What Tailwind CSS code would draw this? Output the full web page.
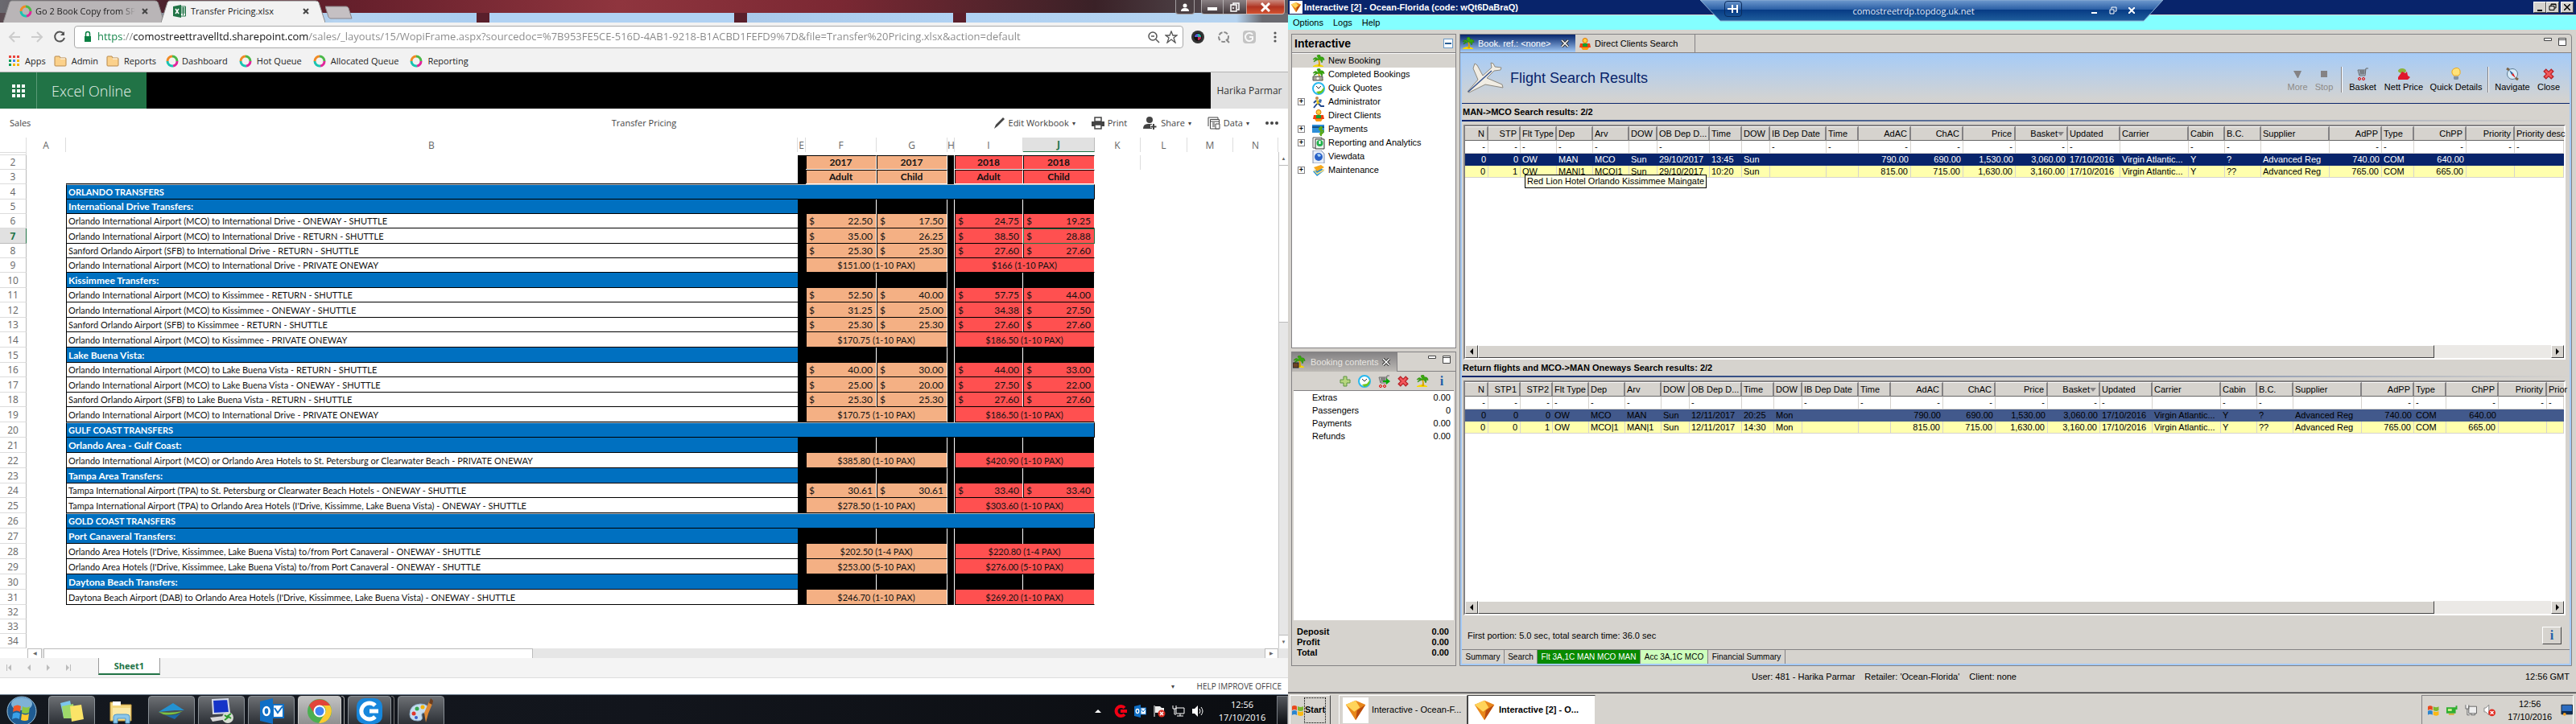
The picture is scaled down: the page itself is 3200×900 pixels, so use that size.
<!DOCTYPE html>
<html lang="en">
<head>
    <meta charset="utf-8">
    <meta name="viewport" content="width=device-width, initial-scale=1">
    <title>Desktop</title>
    <script src="https://cdn.jsdelivr.net/npm/@tailwindcss/browser@4"></script>
</head>
<body class="grid grid-cols-2 h-screen overflow-hidden bg-white text-black">

<!-- shared icons -->
<svg class="hidden">
    <symbol id="ring" viewBox="0 0 16 16" fill="none" stroke-width="3">
        <path d="M8 2a6 6 0 0 1 6 6" stroke="#4cb848"/><path d="M14 8a6 6 0 0 1-5 6" stroke="#e0259c"/>
        <path d="M9 14a6 6 0 0 1-7-6" stroke="#19c3b1"/><path d="M2 8a6 6 0 0 1 6-6" stroke="#f08a24"/>
    </symbol>
    <symbol id="folder" viewBox="0 0 16 14">
        <path d="M1 2q0-1 1-1h5l1 2h6q1 0 1 1v8q0 1-1 1H2q-1 0-1-1z" fill="#fbd18b" stroke="#b8894a"/>
        <path d="M8 4h6" stroke="#fff"/>
    </symbol>
    <symbol id="palm" viewBox="0 0 16 16">
        <path d="M1 14q7-4 13 0v1H1z" fill="#f8d800"/><path d="M7 6q2 4 0 8h3q0-5-1-8z" fill="#d9a400"/>
        <path d="M8 6Q4 1 1 6q3-1 4 0-3 1-3 3 3-2 6-3 3 0 4 4 2-3 0-4 3 0 3 1 0-5-5-4 1-2-1-3-3 0-3 2" fill="#3aa80e" stroke="#1d7d00" stroke-width=".5"/>
    </symbol>
    <symbol id="palmbag" viewBox="0 0 16 16">
        <use href="#palm"/><rect x="0" y="9" width="7" height="6" fill="#6d4326" stroke="#222"/>
    </symbol>
    <symbol id="client" viewBox="0 0 16 16">
        <circle cx="8" cy="3.500" r="3" fill="#ffcf40" stroke="#e07000"/><path d="M2 7h12l1 5H1z" fill="#f04010"/>
        <path d="M5 7h6v4H5z" fill="#16a030"/><path d="M3 12h10l-2 3H5z" fill="#ff9a10"/>
    </symbol>
    <symbol id="clock" viewBox="0 0 16 16">
        <circle cx="8" cy="8" r="7" fill="#fff" stroke="#27b8ef" stroke-width="2"/>
        <path d="M8 15l-3-3 6-1 4-5q0 8-7 9z" fill="#6cc61c"/><path d="M8 8L5 5M8 8l3-3" stroke="#333"/>
    </symbol>
    <symbol id="cross" viewBox="0 0 16 16">
        <path d="M3 3l10 10M13 3L3 13" stroke="#b61f24" stroke-width="5"/><path d="M4 4l8 8M12 4l-8 8" stroke="#f2575b" stroke-width="2.500"/>
    </symbol>
    <symbol id="cart" viewBox="0 0 16 16" fill="none">
        <path d="M15 1h-3l-1 9H4L2 3h10M4 5h7M5 7h6M5 3v6M7 3v6M9 3v6" stroke="#666"/>
        <circle cx="4" cy="14" r="1.500" stroke="#e00000"/><circle cx="9" cy="14" r="1.500" stroke="#e00000"/>
    </symbol>
    <symbol id="gem" viewBox="0 0 16 16">
        <path d="M1 4l7-3 7 3-7 11z" fill="#e8871a"/><path d="M1 4l7-3 3 5-4 3z" fill="#ffd45a"/><path d="M15 4L8 15l1-7z" fill="#b84a10"/>
    </symbol>
    <symbol id="winflag" viewBox="0 0 16 16">
        <path d="M1 3q3-2 6 0v5q-3-2-6 0z" fill="#e8491d"/><path d="M8 3q4 2 7 0v5q-3 2-7 0z" fill="#7cb72e"/>
        <path d="M1 9q3-2 6 0v5q-3-2-6 0z" fill="#2c85cf"/><path d="M8 9q4 2 7 0v5q-3 2-7 0z" fill="#fbb813"/>
    </symbol>
    <symbol id="outlook" viewBox="0 0 16 16">
        <path d="M1 2l8-2v16l-8-2z" fill="#0f6fc6"/><rect x="9" y="4" width="6.500" height="8" fill="#fff" stroke="#0f6fc6"/>
        <path d="M10 6l2 3 3-4" fill="none" stroke="#0f6fc6"/><ellipse cx="5" cy="8" rx="1.800" ry="2.500" fill="none" stroke="#fff" stroke-width="1.300"/>
    </symbol>
    <symbol id="paneMin" viewBox="0 0 10 10"><path d="M.5.500h9v3h-9z" fill="#fff" stroke="#444"/></symbol>
    <symbol id="paneMax" viewBox="0 0 10 10"><path d="M.5.500h9v9h-9zM.5 2.500h9" fill="#fff" stroke="#444"/></symbol>
    <symbol id="paneClose" viewBox="0 0 10 10"><path d="M1 1l8 8M9 1L1 9" stroke="#333" stroke-width="3.500"/><path d="M1 1l8 8M9 1L1 9" stroke="#fff" stroke-width="1.500"/></symbol>
    <symbol id="tabShape" viewBox="0 0 204 28" preserveAspectRatio="none"><path d="M0 28L8 3q1-2 3-2h181q3 0 4 2l8 25" stroke="#8d8d8d"/></symbol>
</svg>

<!-- left monitor: browser with the pricing workbook -->
<section class="flex flex-col min-w-0 h-full font-['Open_Sans',sans-serif] text-[11px] text-[#333]">

    <div class="h-7 flex items-start relative bg-[linear-gradient(90deg,#6a6a70_0,#4a1a26_14%,#67202c_28%,#8f353e_48%,#7b2833_65%,#3a2127_85%,#5c5b5f_99%)]">
        <div class="absolute inset-x-0 bottom-0 h-3 bg-[linear-gradient(90deg,#5a4a50_0,#b5d3f0_26%,#a9cdf0_37%,#5a1f2b_37%,#5a1f2b_38%,#b0d2f3_38%,#b0d2f3_57%,#5a1f2b_57%,#5a1f2b_58%,#a9c9ea_58%,#b0d2f3_74%,#5a1f2b_74%,#5a1f2b_75%,#b0d2f3_75%,#b5d3f0_96%,#6a6a70_98%)]"></div>
        <div class="relative w-[200px] h-7 ml-1">
            <svg class="absolute inset-0 w-full h-full" fill="#b9b5b7"><use href="#tabShape"/></svg>
            <div class="relative flex items-center h-7 pl-5 pr-2">
                <svg class="size-4"><use href="#ring"/></svg>
                <span class="ml-1 flex-1 overflow-hidden whitespace-nowrap text-[#222] [mask-image:linear-gradient(90deg,#000_85%,transparent)]">Go 2 Book Copy from SP</span>
                <button class="w-4 ml-2 mr-1" aria-label="Close tab"><svg class="size-2" stroke="#444" stroke-width="2" viewBox="0 0 8 8"><path d="M1 1l6 6M7 1L1 7"/></svg></button>
            </div>
        </div>
        <div class="relative w-[204px] h-7 -ml-1">
            <svg class="absolute inset-0 w-full h-full" fill="#f2f2f2"><use href="#tabShape"/></svg>
            <div class="relative flex items-center h-7 pl-[15px] pr-2">
                <svg class="size-4" viewBox="0 0 16 16"><path d="M9 2h6.500v12H9z" fill="#fff" stroke="#217346"/><path d="M10 4h5M10 6h5M10 8h5M10 10h5M12.500 3v10" stroke="#217346"/><path d="M0 2l10-2v16L0 14z" fill="#217346"/><path d="M3 5l4 6M7 5l-4 6" stroke="#fff" stroke-width="1.500"/></svg>
                <span class="ml-1.5 flex-1 text-[#222]">Transfer Pricing.xlsx</span>
                <button class="w-4 mr-1" aria-label="Close tab"><svg class="size-2" stroke="#444" stroke-width="2" viewBox="0 0 8 8"><path d="M1 1l6 6M7 1L1 7"/></svg></button>
            </div>
        </div>
        <button class="relative" aria-label="New tab"><svg class="w-9 h-6" viewBox="0 0 36 24"><path d="M0 8h26q2 0 3 2l4 13H7q-2 0-3-2z" fill="#c5c0c3" stroke="#8a8488"/></svg></button>
        <div class="relative ml-auto mr-1 flex h-[18px]">
            <button class="w-6 mr-2 border border-t-0 border-[#ddd]/60 rounded-b-sm bg-[#4b4044] flex justify-center items-center" aria-label="User"><svg class="size-3" fill="#fff" viewBox="0 0 12 12"><circle cx="6" cy="4" r="2.500"/><path d="M1 11q0-4 5-4t5 4z"/></svg></button>
            <button class="w-7 border border-t-0 border-[#ddd]/60 rounded-bl-sm bg-gradient-to-b from-[#8a8184] to-[#453a3e] flex justify-center items-center" aria-label="Minimise"><span class="w-3 h-1 bg-white mt-1"></span></button>
            <button class="w-7 border-b border-[#ddd]/60 bg-gradient-to-b from-[#8a8184] to-[#453a3e] flex justify-center items-center" aria-label="Restore"><svg class="size-3" fill="none" stroke="#fff" stroke-width="1.500" viewBox="0 0 12 12"><path d="M4 3V1h7v8H9M1 3h7v8H1zM4 6v2"/></svg></button>
            <button class="w-12 border border-t-0 border-[#ddd]/60 rounded-br-sm bg-gradient-to-b from-[#c98a80] via-[#b03422] to-[#d2512f] flex justify-center items-center" aria-label="Close"><svg class="size-3" stroke="#fff" stroke-width="3" viewBox="0 0 12 12"><path d="M1 1l10 10M11 1L1 11"/></svg></button>
        </div>
    </div>

    <div class="h-[35px] flex items-center bg-[#f2f2f2] pl-2.5 pr-2">
        <button class="w-7" aria-label="Back"><svg class="size-4" fill="none" stroke="#ccc" stroke-width="2" viewBox="0 0 16 16"><path d="M15 8H2M8 2L2 8l6 6"/></svg></button>
        <button class="w-7" aria-label="Forward"><svg class="size-4" fill="none" stroke="#ccc" stroke-width="2" viewBox="0 0 16 16"><path d="M1 8h13M8 2l6 6-6 6"/></svg></button>
        <button class="w-[26px]" aria-label="Reload"><svg class="size-4" fill="none" stroke="#555" stroke-width="2" viewBox="0 0 16 16"><path d="M13 4a6 6 0 1 0 1 5"/><path d="M14 1v5H9z" fill="#555" stroke="none"/></svg></button>
        <div class="flex-1 flex items-center h-7 bg-white border border-[#aaa] rounded-sm pl-2.5 pr-1.5">
            <svg class="w-3 h-4" viewBox="0 0 12 16"><path d="M2 7h8v7H2z" fill="#0b8043"/><path d="M3.500 7V4a2.500 2.500 0 0 1 5 0v3" fill="none" stroke="#0b8043" stroke-width="1.500"/></svg>
            <input id="address" aria-label="Address" class="flex-1 ml-1.5 text-[13px] outline-none text-transparent bg-clip-text bg-[linear-gradient(90deg,#0b8043_31px,#888_31px,#888_44px,#111_44px,#111_262px,#888_262px)]" value="https://comostreettravelltd.sharepoint.com/sales/_layouts/15/WopiFrame.aspx?sourcedoc=%7B953FE5CE-516D-4AB1-9218-B1ACBD1FEFD9%7D&amp;file=Transfer%20Pricing.xlsx&amp;action=default">
            <button aria-label="Zoom"><svg class="size-4 mr-1.5" fill="none" stroke="#555" stroke-width="1.500" viewBox="0 0 16 16"><circle cx="7" cy="7" r="5"/><path d="M11 11l4 4M5 7h4"/></svg></button>
            <button aria-label="Bookmark"><svg class="size-4" fill="none" stroke="#555" stroke-width="1.300" viewBox="0 0 16 16"><path d="M8 1l2 5h5l-4 3 2 6-5-4-5 4 2-6-4-3h5z"/></svg></button>
        </div>
        <div class="flex items-center gap-4 ml-2.5">
            <svg class="size-4" viewBox="0 0 16 16"><circle cx="8" cy="8" r="8" fill="#333"/><circle cx="8" cy="8" r="5" fill="#111"/><path d="M8 4a4 4 0 0 1 4 4H8z" fill="#29b6a0"/><path d="M4 8a4 4 0 0 1 4-4v4z" fill="#5a5ad6"/><path d="M12 8a4 4 0 0 1-4 4V8z" fill="#cc2a5a"/></svg>
            <svg class="size-4" fill="none" stroke="#8a8a8a" stroke-width="2" viewBox="0 0 16 16"><circle cx="8" cy="8" r="6" stroke-dasharray="5 2"/><path d="M11 11l4 4"/></svg>
            <svg class="size-4" viewBox="0 0 16 16"><rect width="16" height="16" rx="4" fill="#c4c4c4"/><path d="M12 5a5 5 0 1 0 0 6V8H8" fill="none" stroke="#f8f8f8" stroke-width="2"/></svg>
            <button aria-label="Menu"><svg class="size-4" fill="#555" viewBox="0 0 16 16"><circle cx="8" cy="3" r="1.600"/><circle cx="8" cy="8" r="1.600"/><circle cx="8" cy="13" r="1.600"/></svg></button>
        </div>
    </div>

    <nav class="h-[27px] flex items-center bg-[#f2f2f2] border-b border-[#b3b3b3] pl-[11px] gap-2.5 text-[#222]">
        <a href="#" class="flex items-center gap-1.5"><svg class="size-3.5" viewBox="0 0 14 14"><path d="M0 0h3v3H0zM5 0h3v3H5zM10 0h3v3h-3z" fill="#e8453c"/><path d="M0 5h3v3H0z" fill="#0b9d58"/><path d="M5 5h3v3H5z" fill="#4285f4"/><path d="M10 5h3v3h-3zM5 10h3v3H5zM10 10h3v3h-3z" fill="#f4b400"/><path d="M0 10h3v3H0z" fill="#0b9d58"/></svg>Apps</a>
        <a href="#" class="flex items-center gap-1.5"><svg class="w-4 h-3.5"><use href="#folder"/></svg>Admin</a>
        <a href="#" class="flex items-center gap-1.5"><svg class="w-4 h-3.5"><use href="#folder"/></svg>Reports</a>
        <a href="#" class="flex items-center gap-1 ml-0.5"><svg class="size-4"><use href="#ring"/></svg>Dashboard</a>
        <a href="#" class="flex items-center gap-1.5 ml-1"><svg class="size-4"><use href="#ring"/></svg>Hot Queue</a>
        <a href="#" class="flex items-center gap-1.5 ml-1"><svg class="size-4"><use href="#ring"/></svg>Allocated Queue</a>
        <a href="#" class="flex items-center gap-1.5 ml-1"><svg class="size-4"><use href="#ring"/></svg>Reporting</a>
    </nav>

    <header class="h-[45px] flex bg-black">
        <button class="w-[46px] bg-[#217346] border-r border-[#5b9a77] flex items-center justify-center" aria-label="App launcher"><svg class="size-4" fill="#fff" viewBox="0 0 16 16"><path d="M0 0h4v4H0zM6 0h4v4H6zM12 0h4v4h-4zM0 6h4v4H0zM6 6h4v4H6zM12 6h4v4h-4zM0 12h4v4H0zM6 12h4v4H6zM12 12h4v4h-4z"/></svg></button>
        <div class="w-[136px] bg-[#217346] text-[#e4f1ea] text-lg font-light flex items-center pl-[18px]">Excel Online</div>
        <div class="ml-auto w-24 bg-[#e1e1e1] text-xs flex items-center justify-center">Harika Parmar</div>
    </header>

    <div class="h-9 relative flex items-center pl-3 pr-3 text-[#444]">
        <a href="#">Sales</a>
        <span class="absolute inset-x-0 text-center pointer-events-none">Transfer Pricing</span>
        <div class="relative ml-auto flex items-center gap-5">
            <button class="flex items-center gap-1"><svg class="size-3.5" fill="#444" viewBox="0 0 14 14"><path d="M0 14l2-5 9-9 2 2-9 9z"/></svg>Edit Workbook <span class="text-[8px]">▾</span></button>
            <button class="flex items-center gap-1"><svg class="size-4" viewBox="0 0 16 16"><path d="M4 1h8v5H4z" fill="#fff" stroke="#444" stroke-width="1.500"/><path d="M0 6h16v6H0z" fill="#444"/><path d="M4 10h8v5H4z" fill="#fff" stroke="#444" stroke-width="1.500"/></svg>Print</button>
            <button class="flex items-center gap-1"><svg class="w-[18px] h-4" viewBox="0 0 18 16"><circle cx="8" cy="4" r="4" fill="#444"/><path d="M0 15q0-6 6-6h5v6z" fill="#444"/><path d="M13 8v8M9 12h8" stroke="#fff" stroke-width="4"/><path d="M13 9v7M9.500 12.500h7" stroke="#444" stroke-width="2"/></svg>Share <span class="text-[8px]">▾</span></button>
            <button class="flex items-center gap-1"><svg class="size-4" fill="none" stroke="#444" viewBox="0 0 16 16"><path d="M1 12V1h12v2M3.500 15V3.500h11V15zM3 6h11M6 8h3M6 10h3M6 12h3"/><path d="M10 9h5v6h-5z" fill="#fff"/></svg>Data <span class="text-[8px]">▾</span></button>
            <button aria-label="More"><svg class="w-4 h-1" fill="#444" viewBox="0 0 16 4"><circle cx="2" cy="2" r="2"/><circle cx="8" cy="2" r="2"/><circle cx="14" cy="2" r="2"/></svg></button>
        </div>
    </div>

    <div class="flex-1 min-h-0 flex bg-white">
        <div class="flex-1 min-w-0 overflow-hidden">
            <table class="w-full table-fixed border-separate border-spacing-0 font-[Lato,sans-serif] text-xs leading-[17px] text-[#111]">
                <colgroup>
                    <col class="w-[33px]"><col class="w-[49px]"><col><col class="w-2.5"><col class="w-[88px]"><col class="w-[88px]"><col class="w-[9px]">
                    <col class="w-[85px]"><col class="w-[89px]"><col class="w-[57px]"><col class="w-[58px]"><col class="w-[57px]"><col class="w-14">
                </colgroup>
                <thead id="sheetHead" class="font-['Open_Sans',sans-serif] text-[#666]"></thead>
                <tbody id="sheetBody"></tbody>
            </table>
        </div>
        <div class="w-3 mt-[18px] flex flex-col bg-[#e6e6e6] border-l border-[#c8c8c8]">
            <button class="h-[17px] bg-white border-b border-[#bbb] text-[6px] text-[#666]" aria-label="Scroll up">▲</button>
            <div class="h-[195px] bg-white border-b border-[#bbb]"></div>
            <button class="h-[17px] mt-auto bg-white border-t border-[#bbb] text-[6px] text-[#666]" aria-label="Scroll down">▼</button>
        </div>
    </div>
    <div class="h-3 flex bg-[#e6e6e6] pr-3 text-[6px] text-[#666]">
        <div class="w-[34px] bg-white"></div>
        <button class="w-[18px] bg-white border border-b-0 border-[#bbb]" aria-label="Scroll left">◀</button>
        <div class="w-[608px] ml-0.5 bg-white border border-b-0 border-[#bbb]"></div>
        <button class="w-[17px] ml-auto bg-white border border-b-0 border-[#bbb]" aria-label="Scroll right">▶</button>
    </div>
    <div class="h-[25px] flex items-start bg-[#f4f4f4] border-b border-[#ddd]">
        <div class="w-[122px] h-6 flex items-center justify-center gap-4 pr-[26px]">
            <button aria-label="First sheet"><svg class="size-2" fill="#bbb" viewBox="0 0 8 8"><path d="M0 0h1v8H0zM6 0v8L2 4z"/></svg></button>
            <button aria-label="Previous sheet"><svg class="size-2" fill="#bbb" viewBox="0 0 8 8"><path d="M6 0v8L2 4z"/></svg></button>
            <button aria-label="Next sheet"><svg class="size-2" fill="#bbb" viewBox="0 0 8 8"><path d="M2 0v8l4-4z"/></svg></button>
            <button aria-label="Last sheet"><svg class="size-2" fill="#bbb" viewBox="0 0 8 8"><path d="M2 0v8l4-4zM7 0h1v8H7z"/></svg></button>
        </div>
        <button class="w-[77px] h-[21px] bg-white border-x border-[#999] border-b-2 border-b-[#217346] text-[#217346] font-bold leading-[19px]">Sheet1</button>
    </div>
    <div class="h-5 flex items-center justify-end gap-7 pr-2 text-[10px] leading-5 text-[#444]"><span class="text-[8px]">▾</span><a href="#">HELP IMPROVE OFFICE</a></div>

    <footer class="h-10 flex items-center bg-gradient-to-r from-[#14181f] via-[#12151c] to-[#0b0d11] border-t border-[#6f7f90] text-white">
        <button class="w-[60px] flex pl-2" aria-label="Start"><svg class="size-[38px]" viewBox="0 0 38 38"><circle cx="19" cy="19" r="18" fill="#1f5b92" stroke="#9cc3dd"/><ellipse cx="19" cy="10" rx="13" ry="8" fill="#7fb2d6"/><path d="M9 13q5-3 9 0l-1 7q-4-3-9 0z" fill="#f0592a"/><path d="M20 13q5 3 9 0l-1 8q-4 2-9 0z" fill="#8cc63f"/><path d="M8 22q5-3 9 0l-1 7q-4-3-9 0z" fill="#3aa0e8"/><path d="M19 22q5 3 9 0l-1 8q-4 2-9 0z" fill="#fdc92e"/></svg></button>
        <button class="w-[58px] h-[38px] flex items-center justify-center border border-[#8a9096] rounded-sm bg-gradient-to-b from-[#6d7074] to-[#292d33]" aria-label="Sticky notes"><svg class="size-8" viewBox="0 0 32 32"><path d="M2 6l12-3 4 18-12 3z" fill="#7cc6ec"/><path d="M4 10l14-3 2 18-14 0z" fill="#9ed86a"/><path d="M14 10l14-2 3 18-15 3z" fill="#fbe468"/></svg></button>
        <button class="w-[66px] h-[38px] flex items-center justify-center" aria-label="Explorer"><svg class="size-8" viewBox="0 0 32 32"><path d="M2 5h8l2 3h16v20H2z" fill="#f3d67e" stroke="#c79a3a"/><path d="M5 4h10v5H5z" fill="#fff"/><path d="M5 12h22v14H5z" fill="#fae9a8"/><path d="M6 31v-8q0-3 4-3h12q4 0 4 3v8h-5v-6H11v6z" fill="#8cc7ea" stroke="#4a96c8"/></svg></button>
        <button class="w-[58px] h-[38px] flex items-center justify-center border border-[#8a9096] rounded-sm bg-gradient-to-b from-[#6d7074] to-[#292d33]" aria-label="Travel app"><svg class="w-8 h-5" viewBox="0 0 32 20"><path d="M0 11L18 0l14 9-12 0z" fill="#2492d1"/><path d="M0 11q16 2 30-1-12 6-24 4z" fill="#7cc243"/><path d="M8 15l12 5 8-8q-8 4-20 3z" fill="#1b6aa5"/></svg></button>
        <button class="w-[58px] h-[38px] ml-1 flex items-center justify-center border border-[#8a9096] rounded-sm bg-gradient-to-b from-[#6d7074] to-[#292d33]" aria-label="Remote desktop"><svg class="size-8" viewBox="0 0 32 32"><path d="M5 2l19-1 2 17-20 1z" fill="#1534c8" stroke="#d5dbe8" stroke-width="2"/><path d="M2 24l18-2 3 4-18 3z" fill="#d8d8d8"/><circle cx="24" cy="24" r="7" fill="#d6dcd2"/><path d="M20 21l4 3-4 3M28 19l-4 3 4 3" fill="none" stroke="#2c9a2c" stroke-width="2"/></svg></button>
        <button class="w-[58px] h-[38px] ml-1 flex items-center justify-center border border-[#8a9096] rounded-sm bg-gradient-to-b from-[#6d7074] to-[#292d33]" aria-label="Outlook"><svg class="size-8"><use href="#outlook"/></svg></button>
        <button class="w-[54px] h-[38px] ml-1 flex items-center justify-center border border-[#c9c9c9] rounded-sm bg-gradient-to-b from-[#c2c2c2] to-[#8d8d8d]" aria-label="Chrome"><svg class="size-[30px]" viewBox="0 0 30 30"><circle cx="15" cy="15" r="15" fill="#4caf50"/><path d="M2 8a15 15 0 0 1 26 0H15a7 7 0 0 0-6 11z" fill="#e2453a"/><path d="M28 8a15 15 0 0 1-14 22l7-11a7 7 0 0 0-2-11z" fill="#fccb32"/><circle cx="15" cy="15" r="6.500" fill="#4285f4" stroke="#fff" stroke-width="2"/></svg></button>
        <div class="w-1 h-[38px] border-r border-y border-[#aaa] rounded-r-sm"></div>
        <button class="w-[54px] h-[38px] ml-1 flex items-center justify-center border border-[#8a9096] rounded-sm bg-gradient-to-b from-[#6d7074] to-[#292d33]" aria-label="Connect"><svg class="size-8" viewBox="0 0 32 32"><rect width="32" height="32" rx="10" fill="#1787dc"/><path d="M23 9a10 10 0 1 0 0 14M16 16h11" fill="none" stroke="#fff" stroke-width="5"/></svg></button>
        <div class="w-1 h-[38px] border-r border-y border-[#777] rounded-r-sm"></div>
        <button class="w-[58px] h-[38px] ml-1 flex items-center justify-center border border-[#8a9096] rounded-sm bg-gradient-to-b from-[#6d7074] to-[#292d33]" aria-label="Paint"><svg class="size-8" viewBox="0 0 32 32"><path d="M2 20Q2 8 15 7q11 0 10 8-1 4-5 3-4 0-3 4 2 6-5 6Q2 28 2 20z" fill="#c7ddf0" stroke="#8db0cc"/><circle cx="7" cy="19" r="2.500" fill="#e0352b"/><circle cx="11" cy="13" r="2.500" fill="#36a852"/><circle cx="18" cy="11" r="2.500" fill="#f4b400"/><circle cx="10" cy="24" r="2" fill="#3a5fcd"/><path d="M22 30l-2-12L26 4l4 3-5 12z" fill="#e08a35"/><path d="M26 6l2-6 3 3-1 5z" fill="#6b3d1e"/></svg></button>
        <div class="ml-auto flex items-center gap-2">
            <svg class="w-2 h-1 mr-2" fill="#fff" viewBox="0 0 8 4"><path d="M0 4l4-4 4 4z"/></svg>
            <svg class="size-4" viewBox="0 0 16 16"><path d="M13 4a6 6 0 1 0 0 8M8 8h8" fill="none" stroke="#f00014" stroke-width="4"/></svg>
            <svg class="size-4"><use href="#outlook"/></svg>
            <svg class="size-4" viewBox="0 0 16 16"><path d="M2 1v14" stroke="#fff"/><path d="M3 2h6l2 2h3v6H3z" fill="#eee"/><circle cx="11" cy="11" r="4.500" fill="#d92b20"/><path d="M9 9l4 4M13 9l-4 4" stroke="#fff" stroke-width="1.500"/></svg>
            <svg class="size-4" fill="none" stroke="#fff" viewBox="0 0 16 16"><path d="M5 4h10v7H5zM10 11v3M6 14h8M1 1v4h4V1M3 5v7h2"/></svg>
            <svg class="size-4" viewBox="0 0 16 16"><path d="M1 5h3l4-4v14l-4-4H1z" fill="#fff"/><path d="M10 5q2 3 0 6M12 3q4 5 0 10" fill="none" stroke="#fff"/></svg>
            <div class="w-[70px] text-center ml-1 leading-4">12:56<br>17/10/2016</div>
            <button class="w-3.5 h-[38px] border border-[#7a7f86] bg-gradient-to-b from-[#55585d] to-[#0b0d11]" aria-label="Show desktop"></button>
        </div>
    </footer>
</section>

<!-- right monitor: remote session with the booking system -->
<section class="relative flex flex-col min-w-0 h-full bg-[#d6d3ce] font-['Liberation_Sans',sans-serif] text-[11px] leading-[13px]">

    <div class="h-[18px] flex items-center bg-[#08246b] text-white font-bold pl-0.5 pr-[3px]">
        <svg class="size-4 bg-white p-px mr-0.5"><use href="#gem"/></svg>Interactive [2] - Ocean-Florida (code: wQt6DaBraQ)
        <div class="ml-auto flex">
            <button class="w-4 h-3.5 bg-[#d6d3ce] border border-white border-r-[#444] border-b-[#444] flex items-end justify-center" aria-label="Minimise"><span class="w-1.5 h-0.5 bg-black mb-px"></span></button>
            <button class="w-4 h-3.5 bg-[#d6d3ce] border border-white border-r-[#444] border-b-[#444] flex items-center justify-center" aria-label="Restore"><svg class="size-2.5" fill="none" stroke="#000" viewBox="0 0 10 10"><path d="M3 3V1h6v5H7M1 3.500h6v5H1zM3 1.500h6"/></svg></button>
            <button class="w-4 h-3.5 ml-0.5 bg-[#d6d3ce] border border-white border-r-[#444] border-b-[#444] flex items-center justify-center" aria-label="Close"><svg class="size-2" stroke="#000" stroke-width="1.500" viewBox="0 0 8 8"><path d="M0 0l8 8M8 0L0 8"/></svg></button>
        </div>
    </div>
    <nav class="h-[19px] flex items-center gap-3 pl-1.5 bg-[#84ffff] border-t border-[#d6d3ce]">
        <button>Options</button><button>Logs</button><button>Help</button>
    </nav>

    <!-- remote connection bar -->
    <div class="absolute top-0 left-[512px] w-[575px] h-[27px] text-[#e6eefa]">
        <svg class="absolute inset-0 w-full h-full" viewBox="0 0 575 27" preserveAspectRatio="none"><path d="M0 0l25 26h526l24-26z" fill="url(#barFill)" stroke="#8fb0d4"/><defs><linearGradient id="barFill" x2="0" y2="1"><stop stop-color="#6f9ace"/><stop offset=".45" stop-color="#2b5fa5"/><stop offset=".46" stop-color="#063a84"/><stop offset="1" stop-color="#1f5e9c"/></linearGradient></defs></svg>
        <div class="relative flex items-center h-[26px] pl-[30px] pr-7">
            <button class="w-[22px] h-5 -mt-1 border border-[#0a2c5e] rounded-sm flex items-center justify-center" aria-label="Pin"><svg class="size-3.5" stroke="#fff" stroke-width="2" viewBox="0 0 14 14"><path d="M0 7h5M6 2v10M12 2v10M6 7h6"/></svg></button>
            <span class="flex-1 text-center font-['Open_Sans',sans-serif]">comostreetrdp.topdog.uk.net</span>
            <button class="w-[23px] flex justify-center" aria-label="Minimise bar"><span class="w-[7px] h-0.5 bg-white mt-1.5"></span></button>
            <button class="w-[23px] flex justify-center" aria-label="Restore bar"><svg class="size-2.5" fill="none" stroke="#fff" viewBox="0 0 10 10"><path d="M3 3V1h6v5H7M1 4h5v5H1z"/></svg></button>
            <button class="w-[23px] flex justify-center" aria-label="Close bar"><svg class="size-2" stroke="#fff" stroke-width="2" viewBox="0 0 8 8"><path d="M0 0l8 8M8 0L0 8"/></svg></button>
        </div>
    </div>

    <div class="flex-1 min-h-0 flex gap-1 pt-[5px] pl-1 pr-[5px]">
        <aside class="w-[205px] flex flex-col gap-1">
            <div class="flex-1 min-h-0 flex flex-col border border-[#848284]">
                <div class="h-[23px] flex items-center justify-between px-[3px] border-b border-[#848284]">
                    <h2 class="text-sm font-bold">Interactive</h2>
                    <button class="size-3 border border-[#6a9ac8] bg-white flex items-center justify-center" aria-label="Collapse all"><span class="w-2 h-0.5 bg-[#2a5f96]"></span></button>
                </div>
                <ul id="menuTree" class="flex-1 bg-white pt-px"></ul>
            </div>
            <div class="flex-1 min-h-0 flex flex-col border border-[#848284]">
                <div class="h-6 flex">
                    <div class="w-[131px] flex items-center bg-gradient-to-b from-[#848284] to-[#bdbab6] text-[#e8e6e2] border-r border-[#848284] pl-px pr-2">
                        <svg class="size-4 mr-1.5"><use href="#palmbag"/></svg>Booking contents
                        <button class="ml-auto" aria-label="Close view"><svg class="size-2.5"><use href="#paneClose"/></svg></button>
                    </div>
                    <div class="flex-1 flex justify-end gap-2 pr-1.5 pt-1 border-b border-[#848284]"><svg class="size-2.5"><use href="#paneMin"/></svg><svg class="size-2.5"><use href="#paneMax"/></svg></div>
                </div>
                <div class="h-6 flex items-center justify-end gap-2 pr-[7px] mx-0.5 border-b border-[#848284]">
                    <button aria-label="Add"><svg class="size-4" viewBox="0 0 16 16"><path d="M6 2h4v4h4v4h-4v4H6v-4H2V6h4z" fill="#b7d67e" stroke="#5c9440"/></svg></button>
                    <button aria-label="Quick quote"><svg class="size-4"><use href="#clock"/></svg></button>
                    <button aria-label="To basket"><svg class="size-4" viewBox="0 0 16 16"><use href="#cart"/><path d="M7 7h4V4l5 4-5 4V9H7z" fill="#00a800"/></svg></button>
                    <button aria-label="Delete"><svg class="size-4"><use href="#cross"/></svg></button>
                    <button aria-label="New booking"><svg class="size-4"><use href="#palm"/></svg></button>
                    <button aria-label="Info" class="w-4 font-['Liberation_Serif',serif] text-base font-bold text-[#1d5fa8]">i</button>
                </div>
                <dl class="flex-1 mx-0.5 bg-white pl-[23px] pr-1 leading-4">
                    <div class="flex justify-between"><dt>Extras</dt><dd>0.00</dd></div>
                    <div class="flex justify-between"><dt>Passengers</dt><dd>0</dd></div>
                    <div class="flex justify-between"><dt>Payments</dt><dd>0.00</dd></div>
                    <div class="flex justify-between"><dt>Refunds</dt><dd>0.00</dd></div>
                </dl>
                <dl class="h-14 pt-2 pl-1.5 pr-2 font-bold">
                    <div class="flex justify-between"><dt>Deposit</dt><dd>0.00</dd></div>
                    <div class="flex justify-between"><dt>Profit</dt><dd>0.00</dd></div>
                    <div class="flex justify-between"><dt>Total</dt><dd>0.00</dd></div>
                </dl>
            </div>
        </aside>

        <main class="flex-1 min-w-0 flex flex-col border border-[#848284] rounded-tr-sm">
            <div class="h-[23px] flex border-b border-[#848284]">
                <div class="w-[143px] flex items-center bg-gradient-to-b from-[#08246b] to-[#a5cbf7] text-white pl-0.5 pr-2">
                    <svg class="size-4 mr-1"><use href="#palm"/></svg>Book. ref.: &lt;none&gt;
                    <button class="ml-auto" aria-label="Close tab"><svg class="size-2.5"><use href="#paneClose"/></svg></button>
                </div>
                <button class="w-[149px] flex items-center border-r border-[#848284] pl-1 pt-px"><svg class="size-4 mr-1"><use href="#client"/></svg>Direct Clients Search</button>
                <div class="ml-auto flex gap-2 pr-1.5 pt-1"><svg class="size-2.5"><use href="#paneMin"/></svg><svg class="size-2.5"><use href="#paneMax"/></svg></div>
            </div>

            <div class="flex-1 min-h-0 flex flex-col border-[#a5cbf7] border-l-2 border-r-2 border-b-2">
                <div class="h-[63px] flex items-center bg-gradient-to-b from-[#a5cbf7] to-[#d6d3ce] pl-1.5 pr-1 border-b border-[#08246b]">
                    <svg class="w-[46px] h-10" viewBox="0 0 46 40"><path d="M1 37L14 22 8 8l2-6 3 2 7 13 11-10-1-6 3 1 2 4 8 1-1 3-8 1-9 9 19 8 1 4-22-4L3 38z" fill="#f1ede4" stroke="#8f8a80"/><path d="M2 37l29-26" stroke="#34518c" stroke-width="1.500"/></svg>
                    <h1 class="ml-2 text-lg text-[#08246b]">Flight Search Results</h1>
                    <div class="ml-auto pt-1 flex items-center text-center">
                        <button disabled class="flex flex-col items-center gap-0.5 w-8 text-[#8c8a88]"><svg class="size-4" fill="#848284" viewBox="0 0 16 16"><path d="M3 4h10L9 13H8z"/></svg>More</button>
                        <button disabled class="flex flex-col items-center gap-0.5 w-[34px] text-[#8c8a88]"><svg class="size-4" fill="#848284" viewBox="0 0 16 16"><path d="M4 4h8v8H4z"/></svg>Stop</button>
                        <span class="w-0.5 h-8 border-l border-[#848284] bg-white ml-1 mr-1.5"></span>
                        <button class="flex flex-col items-center gap-0.5 w-[38px]"><svg class="size-4"><use href="#cart"/></svg>Basket</button>
                        <button class="flex flex-col items-center gap-0.5 w-16"><svg class="size-4" viewBox="0 0 16 16"><ellipse cx="6" cy="4" rx="5" ry="3" fill="#8cb33c"/><path d="M1 12l5-7 4 2 2-2 1 5 3 2-3 3H1z" fill="#e0182c"/></svg>Nett Price</button>
                        <button class="flex flex-col items-center gap-0.5 w-[66px]"><svg class="size-4" viewBox="0 0 16 16"><path d="M5 10Q2 7 3 4t5-3.500T13 4t-2 6z" fill="#ffe27a" stroke="#e8a820"/><path d="M5 11h6v3l-1 1H6l-1-1z" fill="#8292a4"/></svg>Quick Details</button>
                        <span class="w-0.5 h-8 border-l border-[#848284] bg-white mx-1.5"></span>
                        <button class="flex flex-col items-center gap-0.5 w-[46px]"><svg class="size-4" viewBox="0 0 16 16"><circle cx="8" cy="8" r="6.500" fill="#d9ecf8" stroke="#5c7d96"/><path d="M4 3l5 4-2 2z" fill="#2c5f9c"/><path d="M12 13L7 9l2-2z" fill="#e02020"/><path d="M1 1l3 2M15 15l-3-2" stroke="#7c6548" stroke-width="3"/></svg>Navigate</button>
                        <button class="flex flex-col items-center gap-0.5 w-11"><svg class="size-4"><use href="#cross"/></svg>Close</button>
                    </div>
                </div>

                <h3 class="h-5 flex items-center pl-px font-bold">MAN-&gt;MCO Search results: 2/2</h3>
                <div class="h-0.5 bg-gradient-to-r from-[#08246b] to-[#d6d3ce]"></div>
                <div class="relative flex-1 min-h-0 mt-1 ml-0.5 mr-[5px] flex flex-col border-2 border-[#848284] border-r-white border-b-white bg-white">
                    <table id="outbound" class="w-full table-fixed border-separate border-spacing-0"></table>
                    <div role="tooltip" class="absolute left-[74px] top-[60px] h-[17px] px-0.5 bg-[#ffffe7] border border-black leading-[15px] whitespace-nowrap">Red Lion Hotel Orlando Kissimmee Maingate</div>
                    <div class="mt-auto h-4 flex bg-[#ebe9e6]">
                        <button class="w-4 bg-[#d6d3ce] border border-white border-r-[#444] border-b-[#444] flex items-center justify-center" aria-label="Scroll left"><svg class="w-1 h-2" viewBox="0 0 4 8"><path d="M4 0v8L0 4z"/></svg></button>
                        <div class="basis-[87%] bg-[#d6d3ce] border border-white border-r-[#444] border-b-[#444]"></div>
                        <button class="w-4 ml-auto bg-[#d6d3ce] border border-white border-r-[#444] border-b-[#444] flex items-center justify-center" aria-label="Scroll right"><svg class="w-1 h-2" viewBox="0 0 4 8"><path d="M0 0v8l4-4z"/></svg></button>
                    </div>
                </div>

                <h3 class="h-5 flex items-center pl-px font-bold">Return flights and MCO-&gt;MAN Oneways Search results: 2/2</h3>
                <div class="h-0.5 bg-gradient-to-r from-[#08246b] to-[#d6d3ce]"></div>
                <div class="flex-1 min-h-0 mt-1 ml-0.5 mr-[5px] flex flex-col border-2 border-[#848284] border-r-white border-b-white bg-white">
                    <table id="inbound" class="w-full table-fixed border-separate border-spacing-0"></table>
                    <div class="mt-auto h-4 flex bg-[#ebe9e6]">
                        <button class="w-4 bg-[#d6d3ce] border border-white border-r-[#444] border-b-[#444] flex items-center justify-center" aria-label="Scroll left"><svg class="w-1 h-2" viewBox="0 0 4 8"><path d="M4 0v8L0 4z"/></svg></button>
                        <div class="basis-[87%] bg-[#d6d3ce] border border-white border-r-[#444] border-b-[#444]"></div>
                        <button class="w-4 ml-auto bg-[#d6d3ce] border border-white border-r-[#444] border-b-[#444] flex items-center justify-center" aria-label="Scroll right"><svg class="w-1 h-2" viewBox="0 0 4 8"><path d="M0 0v8l4-4z"/></svg></button>
                    </div>
                </div>

                <div class="h-[42px] flex items-center pt-2 pl-[7px] pr-2.5">
                    First portion: 5.0 sec, total search time: 36.0 sec
                    <button class="ml-auto w-6 h-[22px] border border-white border-r-[#444] border-b-[#444] font-['Liberation_Serif',serif] text-base leading-5 font-bold text-[#1d5fa8]" aria-label="Info">i</button>
                </div>
                <div class="h-[18px] flex border-t border-[#848284] whitespace-nowrap text-[10px]">
                    <button class="w-[53px] border-r border-[#848284]">Summary</button>
                    <button class="w-[41px] border-r border-[#848284]">Search</button>
                    <button class="w-32 bg-[#088a00] text-white border-r border-[#848284]">Flt 3A,1C MAN MCO MAN</button>
                    <button class="w-[84px] bg-[#ceffbd] border-r border-[#848284]">Acc 3A,1C MCO</button>
                    <button class="w-24 border-r border-[#848284]">Financial Summary</button>
                </div>
            </div>
        </main>
    </div>

    <div class="h-[33px] relative flex items-center pb-1.5 pr-2 border-b border-[#848284]">
        <div class="absolute inset-x-0 flex justify-center gap-3 -ml-[119px]"><span>User: 481 - Harika Parmar</span><span>Retailer: 'Ocean-Florida'</span><span>Client: none</span></div>
        <span class="ml-auto">12:56 GMT</span>
    </div>
    <footer class="h-[42px] flex items-center border-t border-[#444] pl-0.5 pr-[3px]">
        <button class="w-[51px] h-[37px] flex items-center border border-white border-r-[#444] border-b-[#444] font-bold"><svg class="size-4 ml-px"><use href="#winflag"/></svg><span class="h-8 flex items-center border border-dotted border-black">Start</span></button>
        <button class="w-40 h-[37px] ml-2.5 flex items-center border border-white border-r-[#444] border-b-[#444] pl-1"><svg class="size-8 bg-white p-0.5 mr-1"><use href="#gem"/></svg>Interactive - Ocean-F...</button>
        <button class="w-[159px] h-[37px] flex items-center bg-white border border-[#444] border-r-[#d6d3ce] border-b-[#d6d3ce] font-bold pl-1"><svg class="size-8 p-0.5 mr-0.5"><use href="#gem"/></svg>Interactive [2] - O...</button>
        <div class="ml-auto w-[189px] h-[37px] flex items-center gap-2 pl-1.5 border border-[#848284] border-r-white border-b-white">
            <svg class="size-4"><use href="#winflag"/></svg>
            <svg class="size-4" viewBox="0 0 16 16"><path d="M1 4h12V2h2v5h-2v5H1z" fill="#2fae2f"/><path d="M3 6h5v3H3z" fill="#c8f08c"/><path d="M4 12h7v2H4z" fill="#d4b13c"/></svg>
            <svg class="size-4" fill="#eee" stroke="#666" viewBox="0 0 16 16"><path d="M5 3h10v9H5zM8 12v2h5v-2M1 1v5h4V1M3 6v8h3"/></svg>
            <svg class="size-4" viewBox="0 0 16 16"><path d="M1 5h2l4-4v13l-4-4H1z" fill="#fff" stroke="#888"/><circle cx="11" cy="11" r="4.500" fill="#e02a20"/><path d="M9 9l4 4M13 9l-4 4" stroke="#fff" stroke-width="1.500"/></svg>
            <div class="w-[62px] ml-1 text-center leading-4">12:56<br>17/10/2016</div>
            <svg class="size-4" viewBox="0 0 16 16"><path d="M1 1h14v12H1z" fill="#2c6cc0" stroke="#123"/><path d="M1 9h14v4H1z" fill="#0e2a50"/><circle cx="5" cy="13" r="2" fill="#f4a020"/></svg>
        </div>
    </footer>
</section>

<script>
    // ---- pricing sheet ----
    // kind: h = area heading, s = sub heading, p = four prices, m = merged price pair, e = empty
    const oneway = "ONEWAY - SHUTTLE", ret = "RETURN - SHUTTLE"
    const sheetRows = [
        [4, 19, "h", "ORLANDO TRANSFERS"],
        [5, 18, "s", "International Drive Transfers:"],
        [6, 18, "p", `Orlando International Airport (MCO) to International Drive - ${oneway}`, "22.50", "17.50", "24.75", "19.25"],
        [7, 19, "p", `Orlando International Airport (MCO) to International Drive - ${ret}`, "35.00", "26.25", "38.50", "28.88"],
        [8, 18, "p", `Sanford Orlando Airport (SFB) to International Drive - ${ret}`, "25.30", "25.30", "27.60", "27.60"],
        [9, 18, "m", "Orlando International Airport (MCO) to International Drive - PRIVATE ONEWAY", "$151.00 (1-10 PAX)", "$166 (1-10 PAX)"],
        [10, 19, "s", "Kissimmee Transfers:"],
        [11, 18, "p", `Orlando International Airport (MCO) to Kissimmee - ${ret}`, "52.50", "40.00", "57.75", "44.00"],
        [12, 19, "p", `Orlando International Airport (MCO) to Kissimmee - ${oneway}`, "31.25", "25.00", "34.38", "27.50"],
        [13, 18, "p", `Sanford Orlando Airport (SFB) to Kissimmee - ${ret}`, "25.30", "25.30", "27.60", "27.60"],
        [14, 19, "m", "Orlando International Airport (MCO) to Kissimmee - PRIVATE ONEWAY", "$170.75 (1-10 PAX)", "$186.50 (1-10 PAX)"],
        [15, 19, "s", "Lake Buena Vista:"],
        [16, 18, "p", `Orlando International Airport (MCO) to Lake Buena Vista - ${ret}`, "40.00", "30.00", "44.00", "33.00"],
        [17, 19, "p", `Orlando International Airport (MCO) to Lake Buena Vista - ${oneway}`, "25.00", "20.00", "27.50", "22.00"],
        [18, 18, "p", `Sanford Orlando Airport (SFB) to Lake Buena Vista - ${ret}`, "25.30", "25.30", "27.60", "27.60"],
        [19, 19, "m", "Orlando International Airport (MCO) to International Drive - PRIVATE ONEWAY", "$170.75 (1-10 PAX)", "$186.50 (1-10 PAX)"],
        [20, 19, "h", "GULF COAST TRANSFERS"],
        [21, 19, "s", "Orlando Area - Gulf Coast:"],
        [22, 19, "m", "Orlando International Airport (MCO) or Orlando Area Hotels to St. Petersburg or Clearwater Beach - PRIVATE ONEWAY", "$385.80 (1-10 PAX)", "$420.90 (1-10 PAX)"],
        [23, 19, "s", "Tampa Area Transfers:"],
        [24, 18, "p", `Tampa International Airport (TPA) to St. Petersburg or Clearwater Beach Hotels - ${oneway}`, "30.61", "30.61", "33.40", "33.40"],
        [25, 19, "m", `Tampa International Airport (TPA) to Orlando Area Hotels (I'Drive, Kissimme, Lake Buena Vista) - ${oneway}`, "$278.50 (1-10 PAX)", "$303.60 (1-10 PAX)"],
        [26, 19, "h", "GOLD COAST TRANSFERS"],
        [27, 19, "s", "Port Canaveral Transfers:"],
        [28, 19, "m", `Orlando Area Hotels (I'Drive, Kissimmee, Lake Buena Vista) to/from Port Canaveral - ${oneway}`, "$202.50 (1-4 PAX)", "$220.80 (1-4 PAX)"],
        [29, 19, "m", `Orlando Area Hotels (I'Drive, Kissimmee, Lake Buena Vista) to/from Port Canaveral - ${oneway}`, "$253.00 (5-10 PAX)", "$276.00 (5-10 PAX)"],
        [30, 19, "s", "Daytona Beach Transfers:"],
        [31, 19, "m", `Daytona Beach Airport (DAB) to Orlando Area Hotels (I'Drive, Kissimmee, Lake Buena Vista) - ${oneway}`, "$246.70 (1-10 PAX)", "$269.20 (1-10 PAX)"],
        [32, 18, "e"], [33, 18, "e"], [34, 18, "e"],
    ]

    const rowNumber = n => n == 7
        ? `<th class="border-b border-r border-[#bbb] border-r-[#217346] bg-[#e1e1e1] text-[#217346] font-['Open_Sans',sans-serif] font-bold">7</th><td></td>`
        : `<th class="border-b border-r border-[#dcdcdc] border-r-[#bbb] text-[#666] font-['Open_Sans',sans-serif] font-normal">${n}</th><td></td>`
    const black = `<td class="bg-black"></td>`
    const fills = ["bg-[#f4b084]", "bg-[#f4b084]", "bg-[#ff5050]", "bg-[#ff5050]"]

    const price = (value, i, selected) => `<td class="${fills[i]} border-b border-b-black border-r border-r-white shadow-[inset_1px_0_0_#000] ${selected ? "outline outline-[#217346] -outline-offset-1" : ""}">
        <div class="flex justify-between pl-1 pr-1"><span>$</span><span>${value}</span></div></td>`
    const merged = (value, i) => `<td colspan="2" class="${fills[i]} border-b border-b-black border-r border-r-white shadow-[inset_1px_0_0_#000] text-center text-[11px]">${value}</td>`
    const label = text => `<td class="border-b border-l border-black pl-0.5 text-[11px]">${text}</td>`
    const blackCell = `<td class="bg-black border-r border-white"></td>`

    function sheetRow([n, height, kind, text, ...v]) {
        let cells = ""
        if (kind == "h")
            cells = `<td colspan="7" class="bg-[#0070c0] text-white text-[11px] font-bold border-y border-t-[#bbb] border-b-black border-x border-x-black pl-0.5 whitespace-nowrap">${text}</td>`
        if (kind == "s")
            cells = `<td class="bg-[#0070c0] text-white font-bold border-b border-l border-black pl-0.5">${text}</td>${black}${blackCell.repeat(5)}`
        if (kind == "p")
            cells = `${label(text)}${black}${price(v[0], 0)}${price(v[1], 1)}${blackCell}${price(v[2], 2)}${price(v[3], 3, n == 7)}`
        if (kind == "m")
            cells = `${label(text)}${black}${merged(v[0], 0)}${blackCell}${merged(v[1], 2)}`
        return `<tr style="height:${height}px">${rowNumber(n)}${cells}</tr>`
    }

    const letter = l => l == "J"
        ? `<th class="bg-[#e1e1e1] border-b border-b-[#217346] border-r border-r-[#bbb] text-[#217346]">J</th>`
        : `<th class="border-r border-[#ddd] font-normal">${l}</th>`
    document.getElementById("sheetHead").innerHTML =
        `<tr class="h-[17px]">${["", "A", "B", "E", "F", "G", "H", "I", "J", "K", "L", "M", "N"].map(letter).join("")}</tr>
         <tr class="h-1"><td class="border-y border-r border-[#dcdcdc]"></td></tr>`

    const titleRow = (n, names, last) => `<tr class="h-[18px] text-center font-bold leading-[16px]">${rowNumber(n)}
        <td class="${last ? "border-b border-black" : ""}"></td>${black}
        ${names.map((t, i) => (i == 2 ? blackCell : "") + `<td class="${fills[i]} border-y border-t-black border-b-white border-r border-r-white shadow-[inset_1px_0_0_#000]">${t}</td>`).join("")}
        ${last ? "" : `<td class="border-r border-[#ddd]"></td>`}</tr>`
    document.getElementById("sheetBody").innerHTML =
        titleRow(2, ["2017", "2017", "2018", "2018"], false) + titleRow(3, ["Adult", "Child", "Adult", "Child"], true) + sheetRows.map(sheetRow).join("")

    // ---- navigation tree ----
    const menu = [
        ["New Booking", `<use href="#palm"/>`, 0],
        ["Completed Bookings", `<use href="#palm"/><path d="M1 10h12v5H1z" fill="#aaa69a" stroke="#555"/><circle cx="7" cy="12.500" r="1.500" fill="#fff"/>`, 0],
        ["Quick Quotes", `<use href="#clock"/>`, 0],
        ["Administrator", `<circle cx="6" cy="3" r="2" fill="#c58a4a"/><path d="M5 5l5 1-1 5H6z" fill="#e8c31c"/><path d="M9 4l3 1-1 4-3-1z" fill="#3c6cb0"/><path d="M6 10l-4 5M8 10l3 3h4M5 6L2 9" stroke="#234a90" stroke-width="2" fill="none"/>`, 1],
        ["Direct Clients", `<use href="#client"/>`, 0],
        ["Payments", `<path d="M0 2h15v10H0z" fill="#2e8fd8"/><path d="M0 4h15v2H0z" fill="#134f86"/><path d="M13 6q-4-1-4 1t3 2 1 3-4 1M11 4v12" fill="none" stroke="#5caa14" stroke-width="2"/>`, 1],
        ["Reporting and Analytics", `<path d="M1 1h11v13H1z" fill="#fff" stroke="#555"/><path d="M4 3h11v12H4z" fill="#eef4ee" stroke="#333"/><circle cx="9.500" cy="8" r="4" fill="#22b14c"/><path d="M9.500 5v4" stroke="#fff" stroke-width="2"/>`, 1],
        ["Viewdata", `<path d="M1 0h10l4 4v12H1z" fill="#e8eef8" stroke="#8090b0"/><circle cx="8" cy="8" r="5" fill="#2a62c8"/><path d="M6 5q4-2 5 2l-3 1z" fill="#a8d4f8"/>`, 0],
        ["Maintenance", `<path d="M1 9l10-4 4 3-9 7z" fill="#2590d8"/><path d="M2 4l9-3 4 3-9 5z" fill="#f5a81c"/><path d="M2 6l4 5 9-5v2l-9 5-4-5z" fill="#ffe07a"/>`, 1],
    ]
    document.getElementById("menuTree").innerHTML = menu.map(([name, icon, children], i) => `
        <li class="h-[17px] flex items-center pl-[7px] ${i == 0 ? "bg-[#d6d3ce]" : ""}">
            ${children ? `<button class="size-[9px] border border-[#848284] text-[9px] leading-[7px] font-bold flex items-center justify-center" aria-label="Expand ${name}">+</button>` : `<span class="w-[9px]"></span>`}
            <svg class="size-4 ml-[9px] mr-1" viewBox="0 0 16 16">${icon}</svg><a href="#">${name}</a>
        </li>`).join("")

    // ---- flight grids: name, width, right aligned, filter dash, first row, second row ----
    const tail = [
        ["Time", 40, 0, "-", "", ""], ["AdAC", 65, 1, "-", "790.00", "815.00"], ["ChAC", 65, 1, "-", "690.00", "715.00"],
        ["Price", 65, 1, "-", "1,530.00", "1,630.00"], ["Basket", 65, 1, "-", "3,060.00", "3,160.00"], ["Updated", 65, 0, "-", "17/10/2016", "17/10/2016"],
        ["Carrier", 85, 0, "", "Virgin Atlantic...", "Virgin Atlantic..."], ["Cabin", 45, 0, "-", "Y", "Y"], ["B.C.", 45, 0, "-", "?", "??"],
        ["Supplier", 85, 0, "", "Advanced Reg", "Advanced Reg"], ["AdPP", 65, 1, "-", "740.00", "765.00"], ["Type", 40, 0, "-", "COM", "COM"],
        ["ChPP", 65, 1, "-", "640.00", "665.00"], ["Priority", 60, 1, "-", "", ""],
    ]
    const outbound = [
        ["N", 29, 1, "-", "0", "0"], ["STP", 40, 1, "-", "0", "1"], ["Flt Type", 45, 0, "-", "OW", "OW"], ["Dep", 45, 0, "-", "MAN", "MAN|1"],
        ["Arv", 45, 0, "-", "MCO", "MCO|1"], ["DOW", 35, 0, "", "Sun", "Sun"], ["OB Dep D...", 65, 0, "-", "29/10/2017", "29/10/2017"],
        ["Time", 40, 0, "", "13:45", "10:20"], ["DOW", 35, 0, "", "Sun", "Sun"], ["IB Dep Date", 70, 0, "-", "", ""], ...tail,
        ["Priority desc", 0, 0, "-", "", ""],
    ]
    const inbound = [
        ["N", 29, 1, "-", "0", "0"], ["STP1", 40, 1, "-", "0", "0"], ["STP2", 40, 1, "-", "0", "1"], ["Flt Type", 45, 0, "-", "OW", "OW"],
        ["Dep", 45, 0, "-", "MCO", "MCO|1"], ["Arv", 45, 0, "-", "MAN", "MAN|1"], ["DOW", 35, 0, "", "Sun", "Sun"], ["OB Dep D...", 65, 0, "-", "12/11/2017", "12/11/2017"],
        ["Time", 40, 0, "", "20:25", "14:30"], ["DOW", 35, 0, "", "Mon", "Mon"], ["IB Dep Date", 70, 0, "-", "", ""], ...tail,
        ["Prior", 0, 0, "-", "", ""],
    ]

    function grid(id, cols, selected) {
        const side = c => c[2] ? "text-right pr-[3px]" : "text-left pl-0.5"
        document.getElementById(id).innerHTML = `
            <colgroup>${cols.map(c => `<col ${c[1] ? `style="width:${c[1]}px"` : ""}>`).join("")}</colgroup>
            <thead><tr class="h-[18px]">${cols.map(c => `<th class="${side(c)} bg-[#d6d3ce] border-t border-t-white border-r-2 border-r-[#848284] border-b border-b-[#666] last:border-r-0 font-normal whitespace-nowrap">${c[0]}${c[0] == "Basket" ? `<svg class="inline size-2" fill="#848284" viewBox="0 0 8 8"><path d="M0 1h8L4 6z"/></svg>` : ""}</th>`).join("")}</tr></thead>
            <tbody>
                <tr class="h-4">${cols.map(c => `<td class="${side(c)} border-r border-b border-[#d6d3ce]">${c[3]}</td>`).join("")}</tr>
                <tr class="h-[15px] ${selected}">${cols.map(c => `<td class="${side(c)} whitespace-nowrap">${c[4]}</td>`).join("")}</tr>
                <tr class="h-[15px] bg-[#ffffad]">${cols.map(c => `<td class="${side(c)} border-r border-b border-[#d6d3ce] whitespace-nowrap">${c[5]}</td>`).join("")}</tr>
            </tbody>`
    }
    grid("outbound", outbound, "bg-[#08246b] text-white")
    grid("inbound", inbound, "bg-[#42598c]")
</script>
</body>
</html>
